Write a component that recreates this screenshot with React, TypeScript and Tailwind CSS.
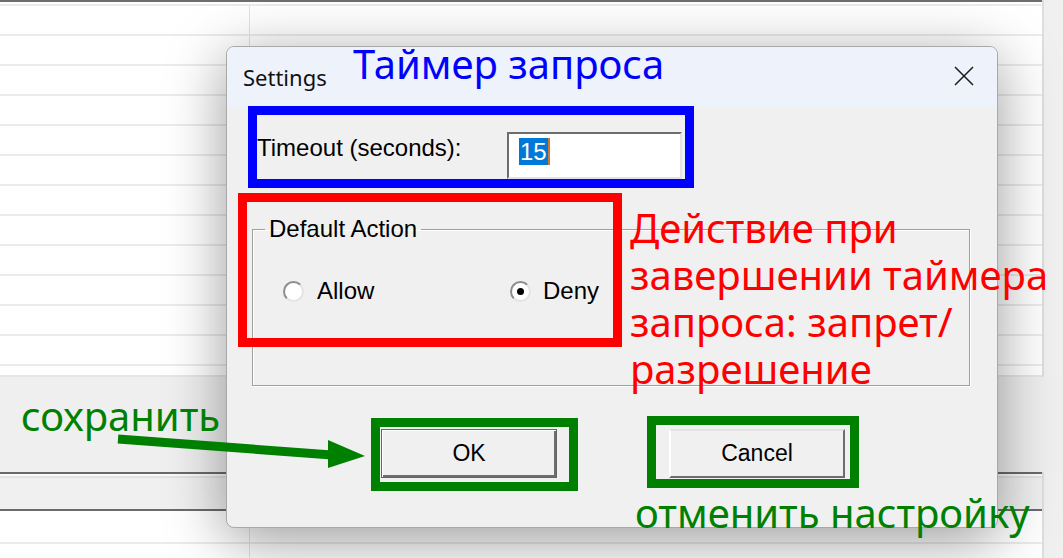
import React from "react";

function Radio({ checked }: { checked?: boolean }) {
  return (
    <span className="w-[21px] h-[21px] rounded-full bg-white border-2 border-t-[#8c8c8c] border-l-[#8c8c8c] border-r-[#e4e4e4] border-b-[#e4e4e4] flex items-center justify-center shrink-0">
      {checked && <span className="w-[7px] h-[7px] rounded-full bg-black" />}
    </span>
  );
}

function Row() {
  return (
    <div className="h-[30px] flex border-b-2 border-[#ebebeb]">
      <div className="w-[250px] border-r border-[#e3e3e3]" />
      <div className="flex-1" />
    </div>
  );
}

export default function App() {
  const rows = Array.from({ length: 12 });
  const ann = "font-['Noto_Sans',sans-serif] text-[40px] leading-[47px] whitespace-nowrap";
  return (
    <div className="relative w-[1063px] h-[558px] overflow-hidden bg-white flex flex-col">
      {/* background window */}
      <div className="h-[377px] flex">
        <div className="w-[1044px] flex flex-col border-r-2 border-[#dedede]">
          <div className="h-[2px] bg-[#6e6e6e]" />
          <div className="h-[2px]" />
          <div className="border-t-2 border-[#ebebeb] flex flex-col">
            {rows.map((_, i) => (
              <Row key={i} />
            ))}
          </div>
          <div className="flex-1 border-b-2 border-[#e6e6e6]" />
        </div>
        <div className="flex-1 bg-[#f0f0f0]" />
      </div>
      <div className="h-[95px] bg-[#efefef]" />
      <div className="flex-1 flex">
        <div className="w-[1044px] flex flex-col border-r-2 border-[#dedede]">
          <div className="h-[2px] bg-[#6a6a6a]" />
          <div className="h-[35px] bg-[#f0f0f0] border-t-2 border-[#fafafa] flex flex-col">
            <div className="h-[2px] bg-[#e2e2e2]" />
          </div>
          <div className="h-[2px] bg-[#6a6a6a]" />
          <div className="flex-1 flex">
            <div className="w-[250px] border-r border-[#e3e3e3] flex flex-col">
              <div className="h-[33px] border-b-2 border-[#ebebeb]" />
            </div>
            <div className="flex-1 flex flex-col">
              <div className="h-[33px] border-b-2 border-[#ebebeb]" />
            </div>
          </div>
        </div>
        <div className="flex-1 bg-[#f0f0f0]" />
      </div>

      {/* dialog */}
      <div className="absolute left-[226px] top-[46px] w-[772px] h-[482px] rounded-[8px] border border-[#a9a9a9] bg-[#f0f0f0] shadow-[0_12px_60px_rgba(0,0,0,0.4)] flex flex-col overflow-hidden">
        <div className="h-[60px] shrink-0 bg-[#eef2fa] flex items-center justify-between pl-[16px] pr-[23px]">
          <span className="font-['Noto_Sans',sans-serif] text-[22px] leading-[30px] text-[#111]">Settings</span>
          <svg width="20" height="20" viewBox="0 0 20 20" className="mt-[-3px]">
            <path d="M1 1 L19 19 M19 1 L1 19" stroke="#1a1a1a" strokeWidth="1.5" fill="none" />
          </svg>
        </div>
        <div className="flex-1 flex flex-col font-['Liberation_Sans',Arial,sans-serif] text-[24px] text-black">
          <div className="mt-[25px] flex items-start pl-[30px]">
            <span className="w-[250px] mt-[4px] leading-[24px] whitespace-nowrap">Timeout (seconds):</span>
            <div className="w-[175px] h-[47px] bg-white border-2 border-t-[#6d6d6d] border-l-[#6d6d6d] border-r-[#e2e2e2] border-b-[#e2e2e2] flex items-start pl-[10px] pt-[4px]">
              <span className="bg-[#0078d7] text-white h-[27px] leading-[27px] px-[1px]">15</span>
              <span className="w-[2px] h-[27px] bg-[#d2782c]" />
            </div>
          </div>
          <fieldset className="ml-[25px] mt-[38px] w-[718px] border border-[#a0a0a0] shadow-[1px_1px_0_#ffffff,inset_1px_1px_0_#ffffff]">
            <legend className="ml-[12px] px-[4px] leading-[24px]">Default Action</legend>
            <div className="flex items-center mt-[38px] mb-[82px] pl-[30px] leading-[24px]">
              <div className="w-[227px] flex items-center gap-[13px]">
                <Radio />
                <span>Allow</span>
              </div>
              <div className="flex items-center gap-[12px]">
                <Radio checked />
                <span>Deny</span>
              </div>
            </div>
          </fieldset>
          <div className="mt-[43px] pl-[154px] flex gap-[112px] text-[23px]">
            <div className="w-[176px] h-[49px] bg-[#f0f0f0] border border-[#646464] shadow-[inset_1px_1px_0_#ffffff,inset_-2px_-2px_0_#6d6d6d] flex items-center justify-center">
              OK
            </div>
            <div className="w-[176px] h-[49px] bg-[#f0f0f0] border-t-2 border-l-2 border-t-[#e3e3e3] border-l-white border-r-2 border-b-2 border-r-[#6d6d6d] border-b-[#6d6d6d] flex items-center justify-center">
              Cancel
            </div>
          </div>
        </div>
      </div>

      {/* annotations */}
      <div className="absolute left-[248px] top-[106px] w-[446px] h-[82px] border-[9px] border-[#0000ff]" />
      <div className={`absolute left-[353px] top-[40px] text-[#0000ff] ${ann}`}>Таймер запроса</div>

      <div className="absolute left-[238px] top-[193px] w-[384px] h-[154px] border-[9px] border-[#ff0000]" />
      <div className={`absolute left-[630px] top-[204px] text-[#ff0000] ${ann}`}>
        <div>Действие при</div>
        <div>завершении таймера</div>
        <div>запроса: запрет/</div>
        <div>разрешение</div>
      </div>

      <div className="absolute left-[371px] top-[418px] w-[207px] h-[73px] border-[9px] border-[#008000]" />
      <div className="absolute left-[647px] top-[416px] w-[212px] h-[72px] border-[9px] border-[#008000]" />

      <div className={`absolute left-[21px] top-[392px] text-[#008000] ${ann}`}>сохранить</div>
      <div className={`absolute left-[635px] top-[489px] text-[#008000] ${ann}`}>отменить настройку</div>

      <svg className="absolute left-0 top-0 pointer-events-none" width="1063" height="558" viewBox="0 0 1063 558">
        <line x1="118" y1="439" x2="332" y2="455" stroke="#008000" strokeWidth="9" />
        <polygon points="328,440 365,456 328,468" fill="#008000" />
      </svg>
    </div>
  );
}
